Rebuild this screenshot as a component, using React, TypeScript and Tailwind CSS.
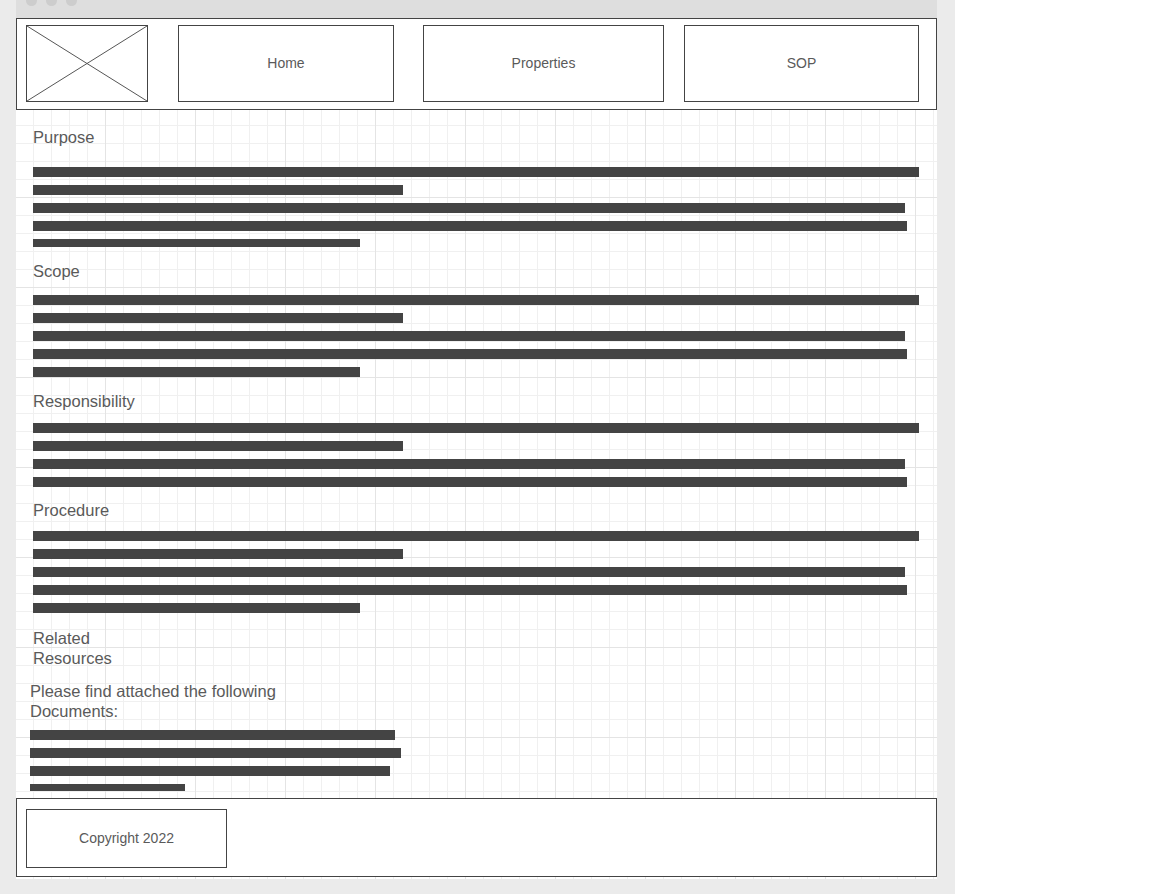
const font = "font-['Liberation_Sans',Arial,sans-serif]";

const sections = [
  { title: "Purpose", mt: "mt-[17px]", gap: "mt-[20px]", bars: [886, 370, 872, 874, 327], last: 8 },
  { title: "Scope", mt: "mt-[14px]", gap: "mt-[14px]", bars: [886, 370, 872, 874, 327], last: 10 },
  { title: "Responsibility", mt: "mt-[14px]", gap: "mt-[12px]", bars: [886, 370, 872, 874], last: 10 },
  { title: "Procedure", mt: "mt-[13px]", gap: "mt-[11px]", bars: [886, 370, 872, 874, 327], last: 10 },
];

const docBars = [365, 371, 360, 155];

function Bars({ widths, last }: { widths: number[]; last: number }) {
  return (
    <div className="flex flex-col gap-[8px]">
      {widths.map((w, i) => (
        <div
          key={i}
          className="bg-[#444444]"
          style={{ width: w, height: i === widths.length - 1 ? last : 10 }}
        />
      ))}
    </div>
  );
}

function NavBox({ label, className }: { label: string; className: string }) {
  return (
    <div className={`h-[77px] border border-[#444] bg-white flex items-center justify-center text-[14px] text-[#5a5a5a] ${className}`}>
      {label}
    </div>
  );
}

export default function App() {
  return (
    <div className={`w-[955px] h-[894px] bg-[#ebebeb] pl-[16px] ${font}`}>
      <div className="w-[921px] flex flex-col">
        {/* window bar */}
        <div className="h-[18px] bg-[#dedede] overflow-hidden">
          <div className="flex gap-[9px] pl-[10px] -mt-[5px]">
            <span className="w-[11px] h-[11px] rounded-full bg-[#cdcdcd]" />
            <span className="w-[11px] h-[11px] rounded-full bg-[#cdcdcd]" />
            <span className="w-[11px] h-[11px] rounded-full bg-[#cdcdcd]" />
          </div>
        </div>

        {/* canvas */}
        <div className="h-[861px] flex flex-col bg-white bg-[linear-gradient(to_right,#e4e4e4_1px,transparent_1px),linear-gradient(to_bottom,#e4e4e4_1px,transparent_1px),linear-gradient(to_right,#f0f0f0_1px,transparent_1px),linear-gradient(to_bottom,#f0f0f0_1px,transparent_1px)] bg-[size:90px_90px,90px_90px,18px_18px,18px_18px] bg-[position:-1px_-1px]">
          {/* header */}
          <div className="h-[92px] shrink-0 border border-[#444] bg-white flex items-start pl-[9px] pt-[6px]">
            <div className="w-[122px] h-[77px] border border-[#444] bg-white">
              <svg width="100%" height="100%" viewBox="0 0 120 75" preserveAspectRatio="none">
                <line x1="0" y1="0" x2="120" y2="75" stroke="#555" strokeWidth="1" />
                <line x1="120" y1="0" x2="0" y2="75" stroke="#555" strokeWidth="1" />
              </svg>
            </div>
            <NavBox label="Home" className="ml-[30px] w-[216px]" />
            <NavBox label="Properties" className="ml-[29px] w-[241px]" />
            <NavBox label="SOP" className="ml-[20px] w-[235px]" />
          </div>

          {/* content */}
          <div className="h-[688px] shrink-0 overflow-hidden pl-[17px] text-[16.5px] leading-[20px] text-[#5a5a5a]">
            {sections.map((s) => (
              <div key={s.title}>
                <div className={s.mt}>{s.title}</div>
                <div className={s.gap}>
                  <Bars widths={s.bars} last={s.last} />
                </div>
              </div>
            ))}
            <div className="mt-[15px] w-[90px]">Related Resources</div>
            <div className="-ml-[3px] mt-[13px] w-[265px]">Please find attached the following Documents:</div>
            <div className="-ml-[3px] mt-[9px]">
              <Bars widths={docBars} last={7} />
            </div>
          </div>

          {/* footer */}
          <div className="h-[79px] shrink-0 border border-[#444] bg-white pl-[9px] pt-[10px]">
            <div className="w-[201px] h-[59px] border border-[#444] flex items-center justify-center text-[14px] text-[#5a5a5a]">
              Copyright 2022
            </div>
          </div>
        </div>
      </div>
    </div>
  );
}
